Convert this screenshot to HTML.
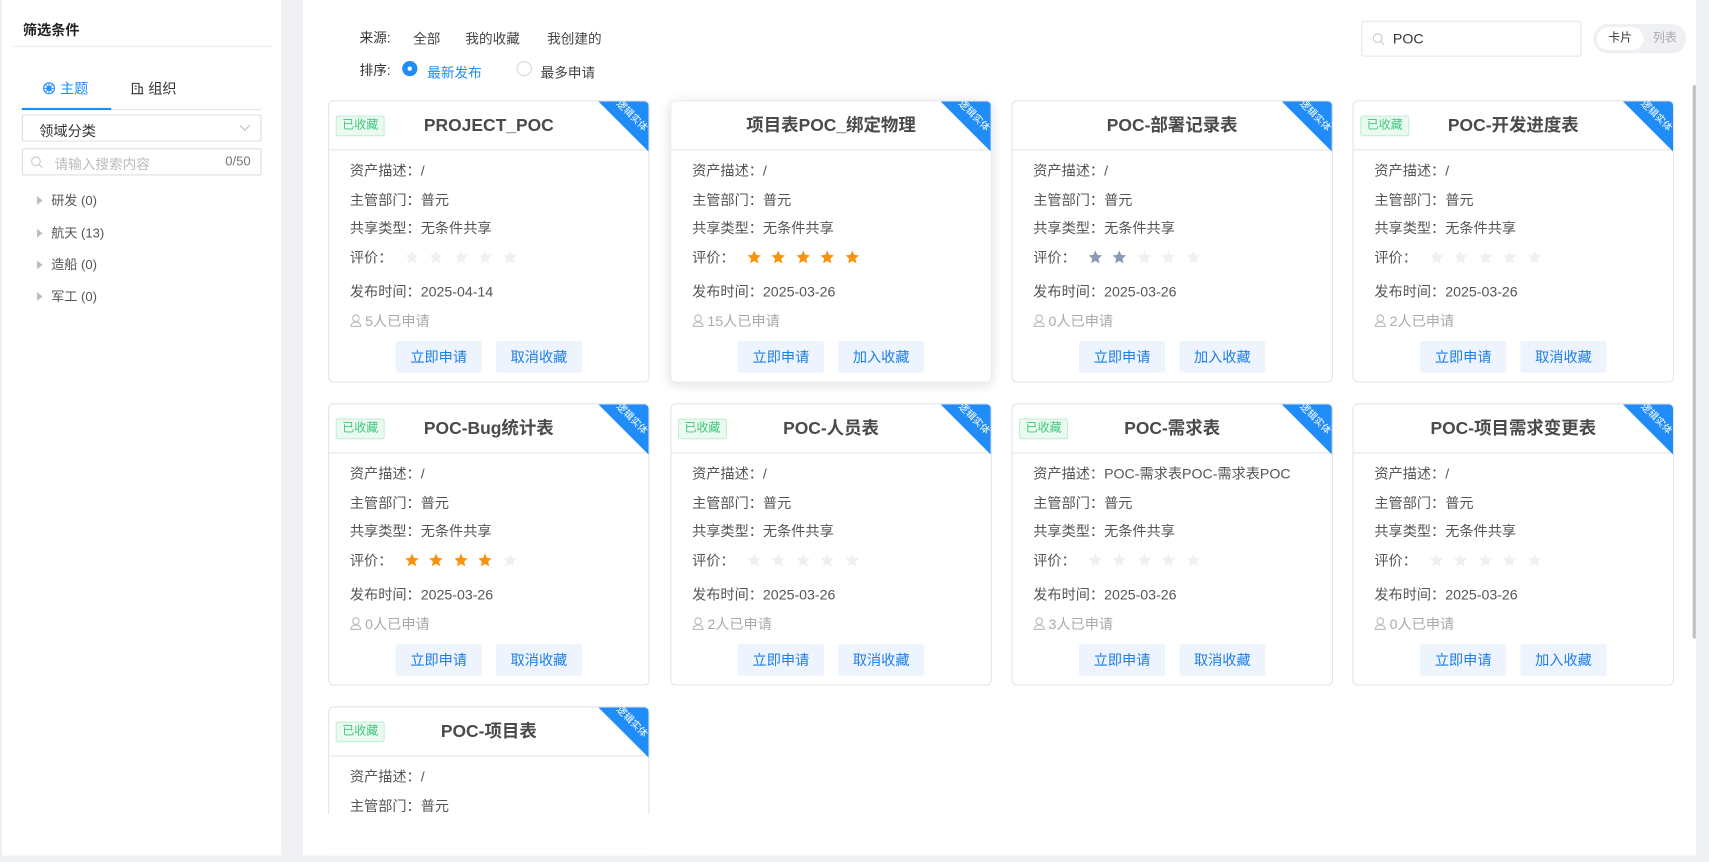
<!DOCTYPE html>
<html><head><meta charset="utf-8">
<style>
*{box-sizing:border-box;margin:0;padding:0}
html,body{width:1709px;height:862px;overflow:hidden;background:#f0f1f4}
body{font-family:"Liberation Sans","Noto Sans CJK SC",sans-serif;color:#555;font-size:13px}
#w{position:absolute;left:0;top:0;width:1568px;height:790px;overflow:hidden;transform:scale(1.0899);transform-origin:0 0}
.abs{position:absolute}
#left{left:2px;top:0;width:256px;height:785px;background:#fff}
#main{left:278px;top:0;width:1278px;height:785px;background:#fff;overflow:hidden}
.card{position:absolute;width:295px;height:259px;border:1px solid #e3e5ec;border-radius:5px;background:#fff;overflow:hidden}
.card.sh{box-shadow:0 2px 10px rgba(0,0,0,.13);border-color:#eceef3}
.hd{height:45px;border-bottom:1px solid #e3e5ec;text-align:center;line-height:45px;font-size:16px;font-weight:bold;color:#4a4a4a}
.tag{position:absolute;left:6px;top:13px;height:19px;line-height:17px;padding:0 5px;font-size:11px;font-weight:normal;color:#3fc77a;background:#eafaf0;border:1px solid #c3efd4;border-radius:2px}
.rib{position:absolute;right:0;top:0;width:0;height:0;border-top:46px solid #1f8cf7;border-left:46px solid transparent}
.ribt{position:absolute;right:-8px;top:8px;width:46px;text-align:center;transform:rotate(45deg);color:#fff;font-size:9px;line-height:10px}
.ln{position:absolute;left:19px;font-size:13px;color:#555;white-space:nowrap}
.star{display:inline-block;width:14px;height:14px;margin-right:8.5px;vertical-align:-2px}
.btn{position:absolute;top:220px;width:79px;height:29px;line-height:29px;text-align:center;background:#edf4fd;color:#1f7ee8;font-size:13px;border-radius:2px}
.tree{position:absolute;left:32px;font-size:12px;color:#555}
.tree:before{content:"";display:inline-block;border-left:5px solid #bbb;border-top:4px solid transparent;border-bottom:4px solid transparent;margin-right:8px;vertical-align:0}
</style></head><body>
<div id="w">
<div id="left" class="abs">
  <div class="abs" style="left:19px;top:17px;font-size:13px;font-weight:bold;color:#222">筛选条件</div>
  <div class="abs" style="left:10px;top:42px;width:237px;height:1px;background:#e8e9ee"></div>
  <div class="abs" style="left:37px;top:71px;color:#1f8cf7;font-size:13px"><svg width="12" height="12" viewBox="0 0 12 12" style="vertical-align:-1px;margin-right:4px"><circle cx="6" cy="6" r="5" fill="none" stroke="#1f8cf7"/><circle cx="6" cy="6" r="2" fill="none" stroke="#1f8cf7"/><path d="M6 1v10M1 6h10M2.5 2.5l7 7M9.5 2.5l-7 7" stroke="#1f8cf7" stroke-width=".8"/></svg>主题</div>
  <div class="abs" style="left:118px;top:71px;color:#333;font-size:13px"><svg width="12" height="12" viewBox="0 0 12 12" style="vertical-align:-1px;margin-right:4px"><path d="M1.5 11V1.5h6V11M7.5 5h3v6M0.5 11h11M3.5 4h2M3.5 6.5h2" fill="none" stroke="#333"/></svg>组织</div>
  <div class="abs" style="left:18px;top:100px;width:220px;height:1px;background:#e3e5ec"></div>
  <div class="abs" style="left:18px;top:99px;width:82px;height:2px;background:#1f8cf7"></div>
  <div class="abs" style="left:18px;top:105px;width:220px;height:25px;border:1px solid #dcdfe6;border-radius:2px"><span class="abs" style="left:15px;top:4px;color:#333;font-size:13px">领域分类</span><svg class="abs" style="right:9px;top:8px" width="11" height="7" viewBox="0 0 11 7"><path d="M1 1l4.5 4.5L10 1" fill="none" stroke="#bbb"/></svg></div>
  <div class="abs" style="left:18px;top:136px;width:220px;height:25px;border:1px solid #dcdfe6;border-radius:2px"><svg class="abs" style="left:7px;top:6px" width="12" height="12" viewBox="0 0 12 12"><circle cx="5" cy="5" r="4" fill="none" stroke="#c5c8cf"/><path d="M8 8l3 3" stroke="#c5c8cf"/></svg><span class="abs" style="left:29px;top:3px;color:#bbb;font-size:12.5px">请输入搜索内容</span><span class="abs" style="right:9px;top:4px;color:#777;font-size:12px">0/50</span></div>
  <div class="tree" style="top:175px">研发 (0)</div>
  <div class="tree" style="top:205px">航天 (13)</div>
  <div class="tree" style="top:234px">造船 (0)</div>
  <div class="tree" style="top:263px">军工 (0)</div>
</div>
<div id="main" class="abs">
  <div class="abs" style="left:52px;top:24px;color:#333;font-size:12.5px">来源:</div>
  <div class="abs" style="left:101px;top:25px;color:#444;font-size:12.5px">全部</div>
  <div class="abs" style="left:149px;top:25px;color:#444;font-size:12.5px">我的收藏</div>
  <div class="abs" style="left:224px;top:25px;color:#444;font-size:12.5px">我创建的</div>
  <div class="abs" style="left:52px;top:54px;color:#333;font-size:12.5px">排序:</div>
  <div class="abs" style="left:91px;top:56px;width:14px;height:14px;border-radius:50%;background:#1f8cf7"><div class="abs" style="left:5px;top:5px;width:4px;height:4px;border-radius:50%;background:#fff"></div></div>
  <div class="abs" style="left:114px;top:56px;color:#1f8cf7;font-size:12.5px">最新发布</div>
  <div class="abs" style="left:196px;top:56px;width:14px;height:14px;border-radius:50%;border:1px solid #d5d8df"></div>
  <div class="abs" style="left:218px;top:56px;color:#444;font-size:12.5px">最多申请</div>
  <div class="abs" style="left:971px;top:19px;width:202px;height:33px;border:1px solid #e3e5ec;border-radius:2px"><svg class="abs" style="left:9px;top:10px" width="12" height="12" viewBox="0 0 12 12"><circle cx="5" cy="5" r="4" fill="none" stroke="#c5c8cf"/><path d="M8 8l3 3" stroke="#c5c8cf"/></svg><span class="abs" style="left:28px;top:8px;color:#333;font-size:13px">POC</span></div>
  <div class="abs" style="left:1184px;top:22px;width:85px;height:27px;border-radius:14px;background:#eff0f3"><div class="abs" style="left:3px;top:3px;width:43px;height:21px;border-radius:11px;background:#fff;text-align:center;line-height:21px;font-size:11px;color:#333">卡片</div><div class="abs" style="left:48px;top:3px;width:35px;line-height:21px;text-align:center;font-size:11px;color:#aaa">列表</div></div>
  <div class="abs" style="left:1275px;top:78px;width:4px;height:508px;border-radius:2px;background:#c1c1c1"></div>
  <div id="cards"></div>
  <div class="abs" style="left:0;top:747px;width:1278px;height:38px;background:#fff"></div>
</div>
</div>
<script>
var data=[
["PROJECT_POC",1,"/","2025-04-14",5,0,"取消收藏","e"],
["项目表POC_绑定物理",0,"/","2025-03-26",15,5,"加入收藏","o",1],
["POC-部署记录表",0,"/","2025-03-26",0,2,"加入收藏","g"],
["POC-开发进度表",1,"/","2025-03-26",2,0,"取消收藏","e"],
["POC-Bug统计表",1,"/","2025-03-26",0,4,"取消收藏","o"],
["POC-人员表",1,"/","2025-03-26",2,0,"取消收藏","e"],
["POC-需求表",1,"POC-需求表POC-需求表POC","2025-03-26",3,0,"取消收藏","e"],
["POC-项目需求变更表",0,"/","2025-03-26",0,0,"加入收藏","e"],
["POC-项目表",1,"/","2025-03-26",0,0,"取消收藏","e"]];
var xs=[23,337,650,963],ys=[92,370,648],h="";
function star(c){return '<svg class="star" viewBox="0 0 24 24"><path d="M12 1.5l3.1 6.9 7.4.8-5.6 5 1.6 7.4L12 17.8l-6.5 3.8 1.6-7.4-5.6-5 7.4-.8z" fill="'+c+'"/></svg>';}
data.forEach(function(d,i){
 var x=xs[i%4],y=ys[Math.floor(i/4)];
 var on={o:"#f7930e",g:"#8c9bb5"}[d[7]]||"#eef0f3";
 var s="";for(var k=0;k<5;k++)s+=star(k<d[5]?on:"#eef0f3");
 h+='<div class="card'+(d[8]?' sh':'')+'" style="left:'+x+'px;top:'+y+'px">'+
 '<div class="hd">'+(d[1]?'<span class="tag">已收藏</span>':'')+d[0]+'</div>'+
 '<div class="rib"></div><div class="ribt">逻辑实体</div>'+
 '<div class="ln" style="top:53px">资产描述：'+d[2]+'</div>'+
 '<div class="ln" style="top:80px">主管部门：普元</div>'+
 '<div class="ln" style="top:106px">共享类型：无条件共享</div>'+
 '<div class="ln" style="top:133px">评价：&nbsp;&nbsp;&nbsp;'+s+'</div>'+
 '<div class="ln" style="top:164px">发布时间：'+d[3]+'</div>'+
 '<div class="ln" style="top:191px;color:#aaa"><svg width="11" height="12" viewBox="0 0 11 12" style="vertical-align:-1px;margin-right:3px"><circle cx="5.5" cy="4" r="3" fill="none" stroke="#bbb"/><path d="M1 11.5h9c0-2.5-2-4-4.5-4S1 9 1 11.5z" fill="none" stroke="#bbb"/></svg>'+d[4]+'人已申请</div>'+
 '<div class="btn" style="left:61px">立即申请</div><div class="btn" style="left:153px">'+d[6]+'</div></div>';
});
document.getElementById("cards").innerHTML=h;
</script>
</body></html>
